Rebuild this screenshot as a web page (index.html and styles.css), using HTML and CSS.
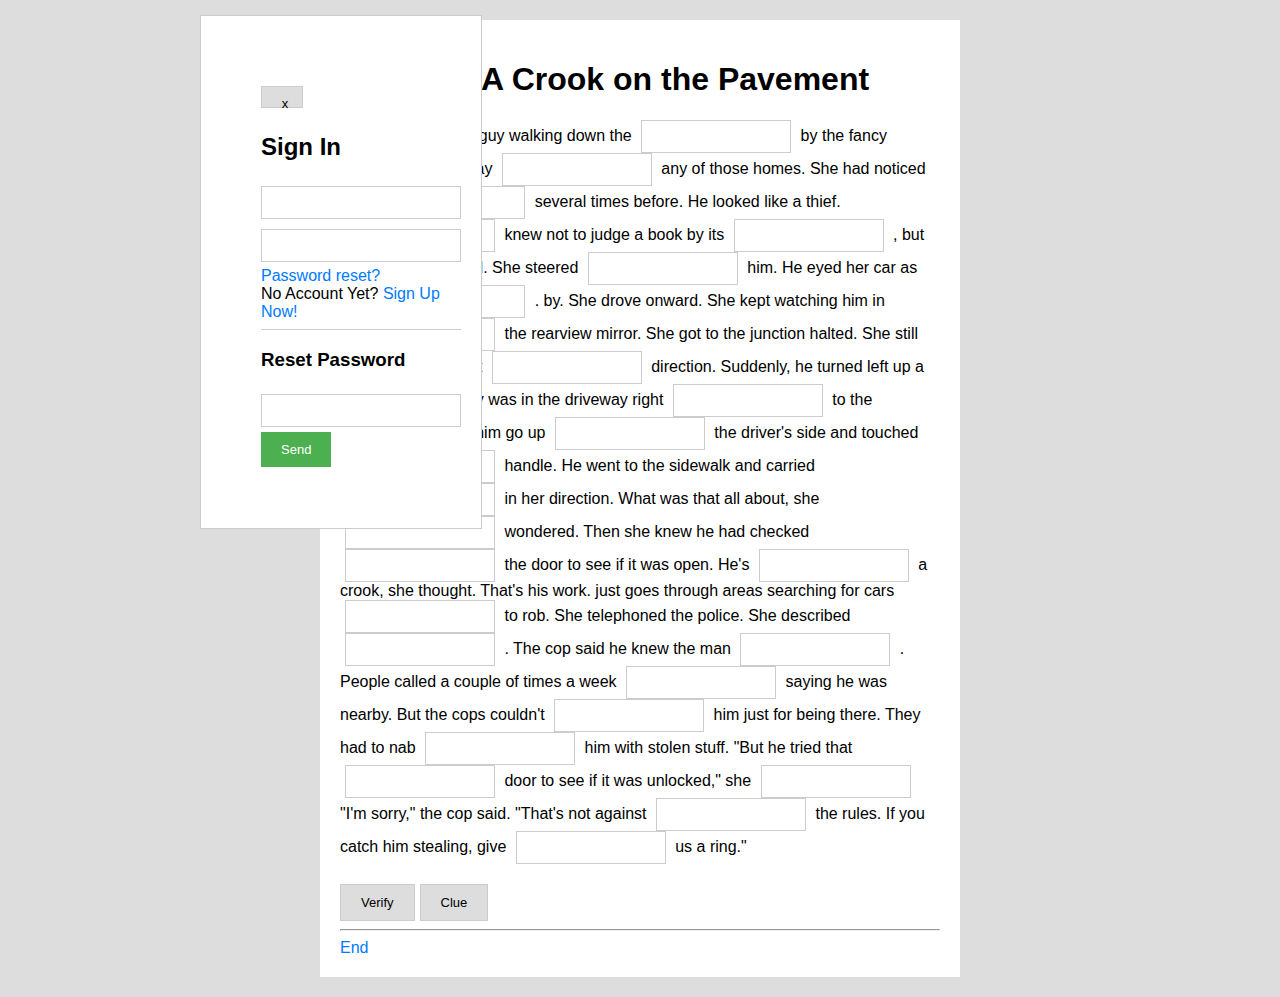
FILE: index.html
```html
<!DOCTYPE html>
<html lang="en">
<head>
<meta charset="utf-8">
<title>A Crook on the Pavement</title>
<link rel="stylesheet" href="styles.css">
</head>
<body>
<main class="page">
  <h1 class="title">A Crook on the Pavement</h1>
  <p class="story">Maria saw a young guy walking down the <input class="blank" type="text"> by the fancy houses. He can't stay <input class="blank" type="text"> any of those homes. She had noticed him <input class="blank" type="text"> several times before. He looked like a thief. <input class="blank" type="text"> knew not to judge a book by its <input class="blank" type="text"> , but he looked really odd. She steered <input class="blank" type="text"> him. He eyed her car as she <input class="blank" type="text"> . by. She drove onward. She kept watching him in <input class="blank" type="text"> the rearview mirror. She got to the junction halted. She still kept glancing in that <input class="blank" type="text"> direction. Suddenly, he turned left up a driveway. His Chevy was in the driveway right <input class="blank" type="text"> to the mansion. She saw him go up <input class="blank" type="text"> the driver's side and touched <input class="blank" type="text"> handle. He went to the sidewalk and carried <input class="blank" type="text"> in her direction. What was that all about, she <input class="blank" type="text"> wondered. Then she knew he had checked <input class="blank" type="text"> the door to see if it was open. He's <input class="blank" type="text"> a crook, she thought. That's his work. just goes through areas searching for cars <input class="blank" type="text"> to rob. She telephoned the police. She described <input class="blank" type="text"> . The cop said he knew the man <input class="blank" type="text"> . People called a couple of times a week <input class="blank" type="text"> saying he was nearby. But the cops couldn't <input class="blank" type="text"> him just for being there. They had to nab <input class="blank" type="text"> him with stolen stuff. "But he tried that <input class="blank" type="text"> door to see if it was unlocked," she <input class="blank" type="text"> "I'm sorry," the cop said. "That's not against <input class="blank" type="text"> the rules. If you catch him stealing, give <input class="blank" type="text"> us a ring."</p>
  <div class="actions">
    <button class="btn" type="button">Verify</button>
    <button class="btn" type="button">Clue</button>
  </div>
  <hr class="rule">
  <a class="end-link" href="#">End</a>
</main>

<aside class="panel">
  <button class="close" type="button">x</button>
  <h2 class="panel-title">Sign In</h2>
  <input class="field" type="text">
  <input class="field field-last" type="password">
  <a class="link block-link" href="#">Password reset?</a>
  <div class="signup">No Account Yet? <a class="link" href="#">Sign Up Now!</a></div>
  <hr class="sep">
  <h3 class="panel-sub">Reset Password</h3>
  <input class="field field-reset" type="text">
  <button class="send" type="button">Send</button>
</aside>
</body>
</html>
```

FILE: styles.css
```css
html, body {
  margin: 0;
  padding: 0;
}

body {
  background: #dddddd;
  font-family: "Liberation Sans", Arial, Helvetica, sans-serif;
  font-size: 16px;
  color: #000;
}

.page {
  width: 600px;
  margin: 20px auto;
  padding: 20px;
  background: #fff;
}

.title {
  font-size: 32px;
  font-weight: bold;
  text-align: center;
  margin: 21.44px 0;
  padding-left: 70px;
}

.story {
  margin: 16px 0 20px;
}

.blank {
  box-sizing: border-box;
  width: 150px;
  height: 33px;
  margin: 0 5px;
  padding: 0 6px;
  border: 1px solid #cccccc;
  background: #fff;
  vertical-align: middle;
  font-family: inherit;
  font-size: 16px;
}

.actions {
  display: flex;
  gap: 5px;
}

.btn {
  background: #dddddd;
  border: 1px solid #cccccc;
  padding: 10px 20px;
  margin: 0;
  font-family: "Liberation Sans", Arial, Helvetica, sans-serif;
  font-size: 13px;
  color: #000;
}

.rule {
  margin: 8px 0;
}

.end-link {
  display: block;
  color: #007bff;
  text-decoration: none;
}

.panel {
  position: absolute;
  left: 200px;
  top: 15px;
  width: 200px;
  padding: 70px 20px 61px 60px;
  background: #fff;
  border: 1px solid #cccccc;
}

.close {
  display: block;
  box-sizing: border-box;
  width: 42px;
  height: 22px;
  padding: 13px 0 0 6px;
  line-height: 7px;
  background: #dddddd;
  border: 1px solid #cccccc;
  font-family: "Liberation Sans", Arial, Helvetica, sans-serif;
  font-size: 13px;
  color: #000;
}

.panel-title {
  font-size: 24px;
  margin: 25px 0 25px;
}

.field {
  display: block;
  box-sizing: border-box;
  width: 200px;
  height: 33px;
  margin: 0 0 10px;
  padding: 0 6px;
  border: 1px solid #cccccc;
  background: #fff;
  font-family: inherit;
  font-size: 16px;
}

.field-last {
  margin-bottom: 5px;
}

.field-reset {
  margin-bottom: 5px;
}

.link {
  color: #007bff;
  text-decoration: none;
}

.block-link {
  display: block;
}

.sep {
  border: 0;
  border-top: 1px solid #cccccc;
  height: 0;
  margin: 8px 0 0;
}

.panel-sub {
  font-size: 18.72px;
  margin: 18.72px 0 23.5px;
}

.send {
  display: block;
  background: #4caf50;
  color: #fff;
  border: 0;
  padding: 10px 20px;
  font-family: "Liberation Sans", Arial, Helvetica, sans-serif;
  font-size: 13px;
}
```
